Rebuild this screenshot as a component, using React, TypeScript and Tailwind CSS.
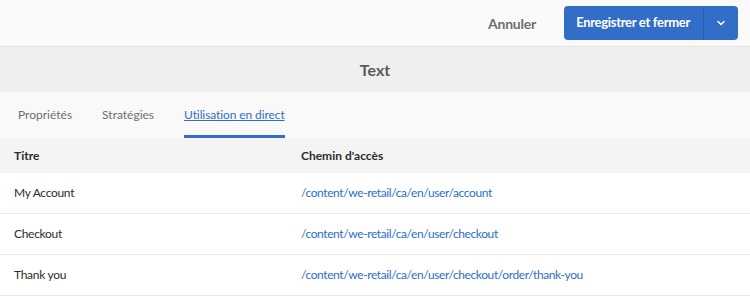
import { ChevronDown } from "lucide-react";

const rows = [
  { title: "My Account", path: "/content/we-retail/ca/en/user/account" },
  { title: "Checkout", path: "/content/we-retail/ca/en/user/checkout" },
  { title: "Thank you", path: "/content/we-retail/ca/en/user/checkout/order/thank-you" },
];

const tabs = ["Propriétés", "Stratégies", "Utilisation en direct"];

export default function App() {
  return (
    <div className="w-[750px] h-[298px] overflow-hidden bg-white font-['Lato',sans-serif] text-[12px]">
      {/* action bar */}
      <div className="h-[47px] bg-[#fafafa] border-b border-[#e3e3e3] flex items-center justify-end pr-[12px]">
        <button className="text-[#6e6e6e] font-bold text-[14px] tracking-[-0.2px] mr-[28px]">Annuler</button>
        <div className="flex h-[34px] rounded-[4px] bg-[#326ec8] text-white overflow-hidden">
          <button className="pl-[12px] pr-[13px] font-bold text-[13px] tracking-[-0.3px]">Enregistrer et fermer</button>
          <button className="w-[35px] border-l border-[#2a5fb0] flex items-center justify-center">
            <ChevronDown size={12} strokeWidth={3} />
          </button>
        </div>
      </div>

      {/* title band */}
      <div className="h-[45px] bg-[#efefef] flex items-center justify-center text-[16px] font-bold text-[#5a5a5a]">
        Text
      </div>

      {/* tabs */}
      <div className="h-[46px] bg-[#f9f9f9] flex items-stretch pl-[18px] gap-[30px]">
        {tabs.map((t, i) => {
          const active = i === tabs.length - 1;
          return (
            <div
              key={t}
              className={
                active
                  ? "flex items-center border-b-[3px] border-[#326ec8] pt-[3px] text-[#326ec8] underline tracking-[-0.1px]"
                  : "flex items-center text-[#6e6e6e]"
              }
            >
              {t}
            </div>
          );
        })}
      </div>

      {/* table */}
      <div className="h-[35px] bg-[#f4f4f4] grid grid-cols-[301px_1fr] items-center font-bold text-[#2c2c2c]">
        <div className="pl-[14px]">Titre</div>
        <div>Chemin d'accès</div>
      </div>
      {rows.map((r) => (
        <div key={r.title} className="h-[41px] border-b border-[#e8e8e8] grid grid-cols-[301px_1fr] items-center">
          <div className="pl-[14px] text-[#2c2c2c] tracking-[-0.3px]">{r.title}</div>
          <div className="text-[#2d6ec9] tracking-[-0.4px]">{r.path}</div>
        </div>
      ))}
    </div>
  );
}
